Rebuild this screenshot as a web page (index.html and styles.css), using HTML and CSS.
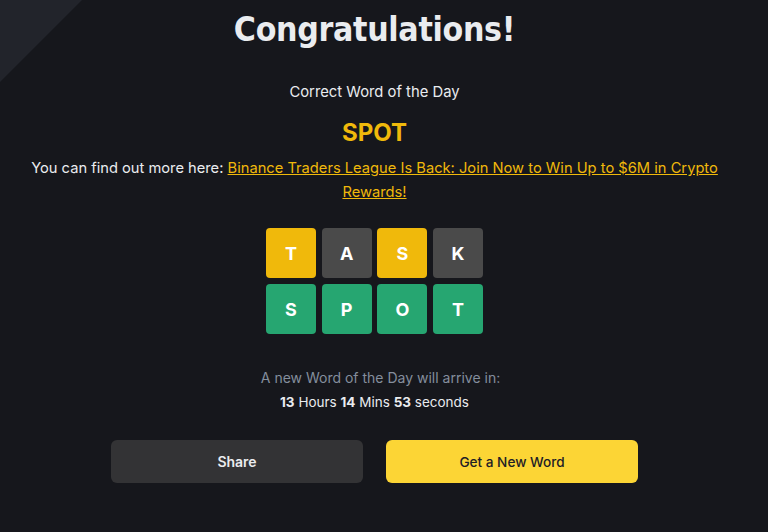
FILE: index.html
```html
<!DOCTYPE html>
<html>
<head>
<meta charset="utf-8">
<link rel="stylesheet" href="styles.css">
</head>
<body>
<div class="page">
  <div class="shine"></div>
  <main class="content">
    <h1 class="title">Congratulations!</h1>
    <p class="label">Correct Word of the Day</p>
    <p class="word">SPOT</p>
    <p class="more">You can find out more here: <a href="#" class="link">Binance Traders League Is Back: Join Now to Win Up to $6M in Crypto Rewards!</a></p>
    <div class="board">
      <div class="tile yellow">T</div>
      <div class="tile gray">A</div>
      <div class="tile yellow">S</div>
      <div class="tile gray">K</div>
      <div class="tile green">S</div>
      <div class="tile green">P</div>
      <div class="tile green">O</div>
      <div class="tile green">T</div>
    </div>
    <p class="next">A new Word of the Day will arrive in:</p>
    <p class="timer"><b>13</b> Hours <b>14</b> Mins <b>53</b> seconds</p>
    <div class="actions">
      <button class="btn share">Share</button>
      <button class="btn primary">Get a New Word</button>
    </div>
  </main>
</div>
</body>
</html>
```
FILE: styles.css
```css
html, body {
  margin: 0;
  padding: 0;
  background: #16171c;
}
body {
  font-family: Inter, "Noto Sans", sans-serif;
  color: #eaecef;
}
.page {
  position: relative;
  width: 768px;
  height: 532px;
  overflow: hidden;
  background: #16171c;
}
.shine {
  position: absolute;
  left: 0;
  top: 0;
  width: 0;
  height: 0;
  border-top: 82px solid #23252c;
  border-right: 82px solid transparent;
  opacity: 0.95;
}
.content {
  position: relative;
  width: 749px;
  display: flex;
  flex-direction: column;
  align-items: center;
  text-align: center;
}
.title {
  margin: 8px 0 0;
  font-family: "DejaVu Sans", sans-serif;
  font-stretch: condensed;
  font-weight: 700;
  font-size: 33.5px;
  line-height: 44px;
  color: #eaecef;
  letter-spacing: -0.3px;
}
.label {
  margin: 30px 0 0;
  font-size: 14.8px;
  line-height: 20px;
  color: #eaecef;
}
.word {
  margin: 16px 0 0;
  font-size: 24px;
  font-weight: 700;
  line-height: 30px;
  color: #f0b90b;
}
.more {
  margin: 8px 0 0;
  width: 720px;
  font-size: 14.7px;
  line-height: 24px;
  color: #eaecef;
}
.link {
  color: #f0b90b;
  text-decoration: underline;
}
.board {
  margin-top: 24px;
  display: grid;
  grid-template-columns: repeat(4, 50px);
  grid-auto-rows: 50px;
  gap: 6px 5.7px;
}
.tile {
  display: flex;
  align-items: center;
  justify-content: center;
  border-radius: 4px;
  font-size: 18px;
  font-weight: 700;
  color: #ffffff;
}
.yellow { background: #f0b90b; }
.gray { background: #4a4a4a; }
.green { background: #26a671; }
.next {
  margin: 34px 0 0;
  padding-left: 12px;
  font-size: 14px;
  line-height: 20px;
  color: #848e9c;
}
.timer {
  margin: 4px 0 0;
  font-size: 13.5px;
  line-height: 20px;
  color: #eaecef;
}
.timer b { font-weight: 700; }
.actions {
  margin-top: 28px;
  display: flex;
  gap: 23px;
}
.btn {
  width: 252px;
  height: 43px;
  border: none;
  border-radius: 6px;
  font-family: Inter, "Noto Sans", sans-serif;
  font-size: 14px;
  font-weight: 600;
}
.share {
  background: #333335;
  color: #eaecef;
}
.primary {
  background: #fcd535;
  color: #1e2026;
  font-weight: 500;
  font-size: 13.6px;
}
```
